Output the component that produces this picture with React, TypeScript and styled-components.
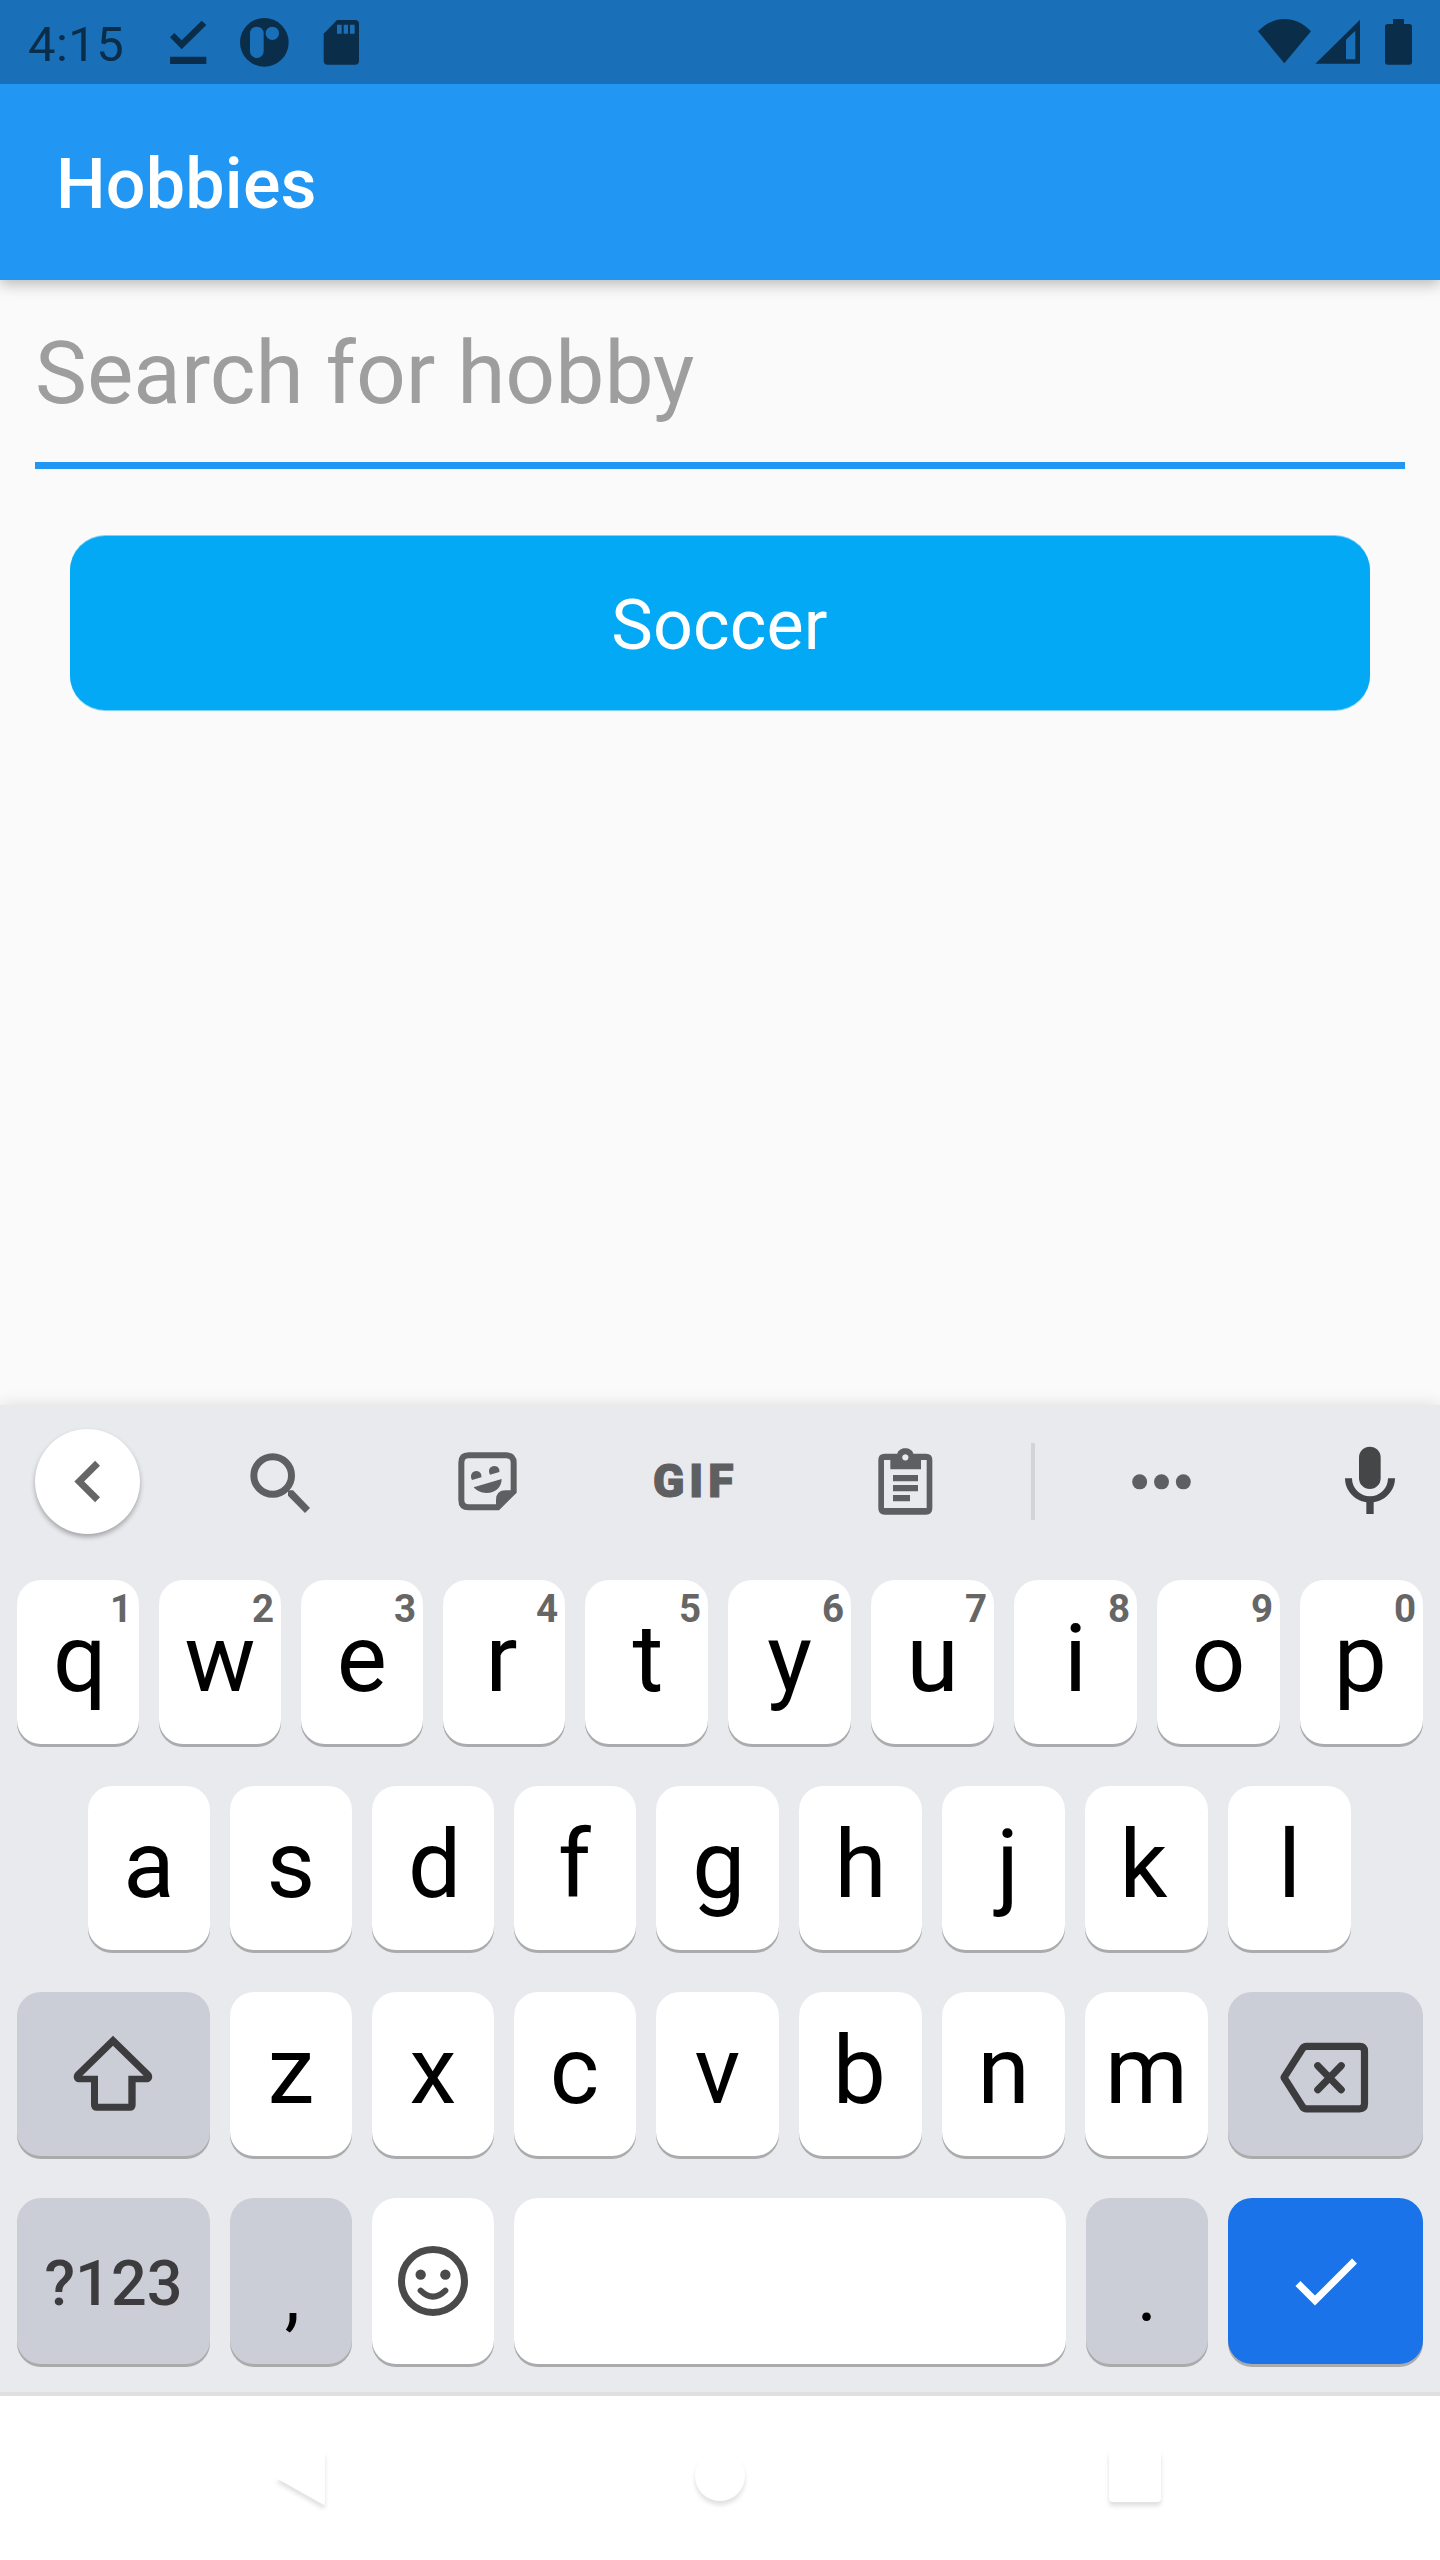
import React from "react";
import styled, { createGlobalStyle, css } from "styled-components";

const GlobalStyle = createGlobalStyle`
  * { box-sizing: border-box; }
  body {
    margin: 0;
    background: #fafafa;
    font-family: Roboto, "Noto Sans", sans-serif;
  }
`;

const INK = "#0a2d49";
const TOOL = "#5d5f61";
const KEY_ICON = "#3c3c3e";

const Screen = styled.div`
  width: 1440px;
  height: 2560px;
  display: flex;
  flex-direction: column;
  background: #fafafa;
  overflow: hidden;
`;

/* ---------- status bar ---------- */

const StatusBar = styled.header`
  height: 84px;
  flex: none;
  display: flex;
  justify-content: space-between;
  padding: 0 27px 0 28px;
  background: #1a70b8;
  z-index: 2;
`;

const StatusGroup = styled.div`
  display: flex;
  align-items: center;
`;

const Clock = styled.span`
  width: 140px;
  padding-top: 5px;
  font-size: 49px;
  line-height: 60px;
  letter-spacing: 0.4px;
  color: ${INK};
`;

const StatusIcon = styled.svg<{ $gap?: number }>`
  display: block;
  flex: none;
  height: 84px;
  margin-left: ${(p) => p.$gap ?? 0}px;
  fill: ${INK};
`;

/* ---------- app ---------- */

const AppBar = styled.div`
  height: 196px;
  flex: none;
  display: flex;
  align-items: center;
  padding: 4px 56px 0;
  background: #2196f3;
  box-shadow: 0 4px 14px rgba(0, 0, 0, 0.27);
  z-index: 1;
`;

const Title = styled.h1`
  margin: 0;
  font-size: 70px;
  line-height: 82px;
  font-weight: 500;
  letter-spacing: 0.2px;
  color: #fff;
`;

const Content = styled.main`
  flex: 1;
  display: flex;
  flex-direction: column;
  padding: 0 35px;
`;

const SearchField = styled.div`
  height: 189px;
  padding-top: 43px;
  border-bottom: 7px solid #2196f3;
  font-size: 87.5px;
  line-height: 100px;
  color: #9e9e9e;
`;

const HobbyChip = styled.button`
  height: 174px;
  margin: 67px 35px 0;
  padding: 4px 1px 0 0;
  border: 0;
  border-radius: 35px;
  background: #03a9f4;
  box-shadow: 0 1px 0 rgba(3, 169, 244, 0.5), 0 -1px 0 rgba(3, 169, 244, 0.5);
  font: 400 70px/82px Roboto, sans-serif;
  letter-spacing: 0.15px;
  color: #fff;
`;

/* ---------- keyboard ---------- */

const Keyboard = styled.section`
  height: 991px;
  flex: none;
  background: #e8eaee;
  border-bottom: 4px solid #e0e0e0;
  box-shadow: 0 0 16px rgba(0, 0, 0, 0.12);
`;

const Toolbar = styled.div`
  height: 175px;
  display: flex;
  align-items: flex-start;
  padding: 24px 35px 0;
`;

const ToolSlot = styled.div<{ $gap: number }>`
  height: 105px;
  display: flex;
  align-items: center;
  margin-left: ${(p) => p.$gap}px;
`;

const BackCircle = styled.div`
  width: 105px;
  height: 105px;
  display: flex;
  align-items: center;
  justify-content: center;
  border-radius: 50%;
  background: #fff;
  box-shadow: 0 3px 5px rgba(0, 0, 0, 0.3);
`;

const ToolIcon = styled.svg<{ $color?: string }>`
  display: block;
  height: 79px;
  fill: ${(p) => p.$color ?? TOOL};
`;

const GifLabel = styled.span`
  width: 81px;
  padding-bottom: 1px;
  font-size: 46px;
  line-height: 60px;
  font-weight: 900;
  letter-spacing: 5px;
  white-space: nowrap;
  color: ${TOOL};
  -webkit-text-stroke: 1.2px ${TOOL};
`;

const Divider = styled.div`
  width: 4px;
  height: 77px;
  background: #d2d4d8;
`;

const Rows = styled.div`
  display: flex;
  flex-direction: column;
  gap: 42px;
`;

const Row = styled.div<{ $inset?: boolean }>`
  display: flex;
  gap: 20px;
  padding-left: ${(p) => (p.$inset ? 88 : 17)}px;
`;

type Tone = "light" | "dark" | "accent";
const tones: Record<Tone, string> = { light: "#fff", dark: "#cbced6", accent: "#1a73e8" };

const Key = styled.div<{ $w: number; $tone?: Tone; $tall?: boolean; $kind?: "letter" | "mark" | "label" }>`
  position: relative;
  width: ${(p) => p.$w}px;
  height: ${(p) => (p.$tall ? 166 : 164)}px;
  display: flex;
  align-items: center;
  justify-content: center;
  border-radius: 24px;
  background: ${(p) => tones[p.$tone ?? "light"]};
  box-shadow: 0 3px 0 #aaabad;
  font-size: 94.5px;
  line-height: 110px;
  color: #000;
  ${(p) => p.$kind === "letter" && css`padding-bottom: 6px;`}
  ${(p) =>
    p.$kind === "mark" &&
    css`
      padding-top: 28px;
      font-size: 77px;
    `}
  ${(p) =>
    p.$kind === "label" &&
    css`
      padding-top: 5px;
      font-size: 63px;
      line-height: 74px;
      font-weight: 500;
      color: ${KEY_ICON};
    `}
`;

/* Optical centring: shifts a glyph so that its ink sits in the middle of the key. */
const Glyph = styled.span<{ $shift: number }>`
  margin-left: ${(p) => p.$shift * 2}px;
`;

const Hint = styled.span`
  position: absolute;
  top: 6px;
  right: 7px;
  font-size: 38.5px;
  line-height: 46px;
  font-weight: 700;
  color: #666;
`;

const KeyIcon = styled.svg`
  display: block;
`;

/* ---------- navigation bar ---------- */

const NavBar = styled.nav`
  height: 164px;
  flex: none;
  display: flex;
  align-items: center;
  justify-content: space-between;
  padding: 0 270px 0 266px;
  background: #fff;
`;

const NavIcon = styled.svg`
  display: block;
  overflow: visible;
  fill: #fff;
  filter: drop-shadow(0 4px 2px rgba(0, 0, 0, 0.12));
`;

const letterWidth = (i: number) => (i < 4 ? 122 : 123);

const shifts: Record<string, number> = {
  q: 1.8, r: -2.5, t: 1.5, p: -1.1, d: 1.6, f: -0.7, g: 1.4, j: 4.3, k: -3, b: -1.1, c: -0.4, e: -0.3,
};

function Letter({ char, index, hint }: { char: string; index: number; hint?: number }) {
  return (
    <Key $w={letterWidth(index)} $kind="letter">
      <Glyph $shift={shifts[char] ?? 0}>{char}</Glyph>
      {hint !== undefined && <Hint>{hint}</Hint>}
    </Key>
  );
}

export default function App() {
  return (
    <Screen>
      <GlobalStyle />
      <StatusBar>
        <StatusGroup>
          <Clock>4:15</Clock>
          <StatusIcon width="40" viewBox="504 0 120 252">
            <path d="M605 62l14 13-74 73-35-36 13-13 22 22zM510 170h109v22H510z" />
          </StatusIcon>
          <StatusIcon $gap={31} width="51" viewBox="717 0 153 252">
            <circle cx="793" cy="127" r="73" />
            <rect x="750" y="80" width="41" height="94" rx="20" fill="#1a70b8" />
            <circle cx="817" cy="100" r="20" fill="#1a70b8" />
          </StatusIcon>
          <StatusIcon $gap={32} width="39" viewBox="966 0 117 252">
            <path d="M1011 60h54q12 0 12 12v110q0 12-12 12h-82q-12 0-12-12v-81z" />
            <path fill="#1a70b8" d="M1011 74h14v27h-14zM1031 74h13v27h-13zM1050 74h14v27h-14z" />
          </StatusIcon>
        </StatusGroup>
        <StatusGroup>
          <StatusIcon width="55" viewBox="171 0 165 252">
            <path d="M174 94C220 45 287 45 333 94L253 190z" />
          </StatusIcon>
          <StatusIcon $gap={2} width="47" viewBox="342 0 141 252">
            <path fillRule="evenodd" d="M480 59V191H346zM438 119V178H466V92z" />
          </StatusIcon>
          <StatusIcon $gap={23} width="29" viewBox="552 0 87 252">
            <path d="M579 57h33v15h16q8 0 8 8v106q0 8-8 8h-65q-8 0-8-8V80q0-8 8-8h16z" />
          </StatusIcon>
        </StatusGroup>
      </StatusBar>

      <AppBar>
        <Title>Hobbies</Title>
      </AppBar>

      <Content>
        <SearchField>Search for hobby</SearchField>
        <HobbyChip>Soccer</HobbyChip>
      </Content>

      <Keyboard>
        <Toolbar>
          <BackCircle>
            <svg width="83" height="83" viewBox="-0.2 0 24 24" fill="#666">
              <path d="M15.41 7.41 14 6l-6 6 6 6 1.41-1.41L10.83 12z" />
            </svg>
          </BackCircle>
          <ToolSlot $gap={110}>
            <ToolIcon width="61" viewBox="60 66 183 237">
              <circle cx="128" cy="166.500" r="56.500" fill="none" stroke={TOOL} strokeWidth="21" />
              <path d="M174 211h15l51 53-15 15-51-52z" />
            </ToolIcon>
          </ToolSlot>
          <ToolSlot $gap={147}>
            <ToolIcon width="59" viewBox="684 66 177 237">
              <path
                fillRule="evenodd"
                d="M716 97H829Q860 97 860 128V218L807 271H716Q685 271 685 240V128Q685 97 716 97ZM716 115Q703 115 703 128V240Q703 253 716 253H798V240Q798 211 827 211H842V128Q842 115 829 115Z"
              />
              <path d="M726 180C718 165 727 153 739 153 750 153 756 163 754 172zM780 164C772 149 781 138 793 138 804 138 810 147 808 156zM731 202L815 177C815 203 795 219 770 219 752 219 740 212 731 202z" />
            </ToolIcon>
          </ToolSlot>
          <ToolSlot $gap={136}>
            <GifLabel>GIF</GifLabel>
          </ToolSlot>
          <ToolSlot $gap={143}>
            <ToolIcon width="57" viewBox="51 66 171 237">
              <path
                fillRule="evenodd"
                d="M74 101H112C116 79 156 79 160 101H198Q217 101 217 120V265Q217 284 198 284H74Q55 284 55 265V120Q55 101 74 101ZM72 120V264H200V120H183V148H91V120ZM136 102.500a9.500 9.500 0 1 0 .1 0ZM99 165H174V184H99ZM99 195H174V214H99ZM99 225H150V244H99Z"
              />
            </ToolIcon>
          </ToolSlot>
          <ToolSlot $gap={97}>
            <Divider />
          </ToolSlot>
          <ToolSlot $gap={97}>
            <ToolIcon width="59" viewBox="816 66 177 237">
              <circle cx="839" cy="185.500" r="22.500" />
              <circle cx="904.500" cy="185.500" r="22.500" />
              <circle cx="970" cy="185.500" r="22.500" />
            </ToolIcon>
          </ToolSlot>
          <ToolSlot $gap={153}>
            <ToolIcon $color="#444648" width="52" viewBox="1452 66 156 237">
              <rect x="1497" y="80" width="65" height="127" rx="32.500" />
              <path d="M1455 175H1476A54 54 0 0 0 1584 175H1605C1605 212 1576 242 1541 247V282H1519V247C1484 242 1455 212 1455 175z" />
            </ToolIcon>
          </ToolSlot>
        </Toolbar>

        <Rows>
          <Row>
            {"qwertyuiop".split("").map((c, i) => (
              <Letter key={c} char={c} index={i} hint={(i + 1) % 10} />
            ))}
          </Row>
          <Row $inset>
            {"asdfghjkl".split("").map((c, i) => (
              <Letter key={c} char={c} index={i} />
            ))}
          </Row>
          <Row>
            <Key $w={193} $tone="dark">
              <KeyIcon width="81" height="80" viewBox="69 42 243 240" fill={KEY_ICON}>
                <path
                  fillRule="evenodd"
                  d="M189 47L301 157C313 170 304 187 290 187H257V254Q257 272 239 272H141Q123 272 123 254V187H88C73 187 65 170 77 157ZM189 77L97 167H144V251H235V167H281Z"
                />
              </KeyIcon>
            </Key>
            {"zxcvbnm".split("").map((c, i) => (
              <Letter key={c} char={c} index={i + 1} />
            ))}
            <Key $w={195} $tone="dark">
              <KeyIcon
                width="95"
                height="80"
                viewBox="0.5 0 95 80"
                fill="none"
                stroke={KEY_ICON}
                strokeWidth="7.200"
                strokeLinecap="round"
                strokeLinejoin="round"
              >
                <path d="M6.500 43.500L25 14.500Q26.500 12.300 29 12.300H82Q87 12.300 87 17.300V69.800Q87 74.800 82 74.800H29Q26.500 74.800 25 72.600Z" />
                <path d="M40.300 31.700L63.700 55.700M63.700 31.700L40.300 55.700" />
              </KeyIcon>
            </Key>
          </Row>
          <Row>
            <Key $w={193} $tone="dark" $tall $kind="label">
              ?123
            </Key>
            <Key $w={122} $tone="dark" $tall $kind="mark">
              <Glyph $shift={1.3}>,</Glyph>
            </Key>
            <Key $w={122} $tall>
              <KeyIcon width="72" height="72" viewBox="1041 675 216 216" fill="#4a4a4a">
                <circle cx="1149" cy="783" r="94.500" fill="none" stroke="#4a4a4a" strokeWidth="21" />
                <circle cx="1112" cy="764" r="15.500" />
                <circle cx="1186" cy="764" r="15.500" />
                <path d="M1112 812Q1149 848 1186 812" fill="none" stroke="#4a4a4a" strokeWidth="18" strokeLinecap="round" />
              </KeyIcon>
            </Key>
            <Key $w={552} $tall />
            <Key $w={122} $tone="dark" $tall $kind="mark">
              <Glyph $shift={0}>.</Glyph>
            </Key>
            <Key $w={195} $tone="accent" $tall>
              <KeyIcon width="83" height="84" viewBox="0.143 0 23.714 24" fill="#fff">
                <path d="M9 16.170 4.830 12l-1.420 1.410L9 19 21 7l-1.410-1.410z" />
              </KeyIcon>
            </Key>
          </Row>
        </Rows>
      </Keyboard>

      <NavBar>
        <NavIcon width="70" height="60" viewBox="0 0 70 60">
          <path d="M10 30L56 4Q59 2 59 6V54Q59 58 56 56z" />
        </NavIcon>
        <NavIcon width="50" height="50" viewBox="0 0 50 50">
          <circle cx="27" cy="23" r="25" />
        </NavIcon>
        <NavIcon width="70" height="60" viewBox="0 0 70 60">
          <rect x="9" y="2" width="52" height="52" rx="4" />
        </NavIcon>
      </NavBar>
    </Screen>
  );
}
